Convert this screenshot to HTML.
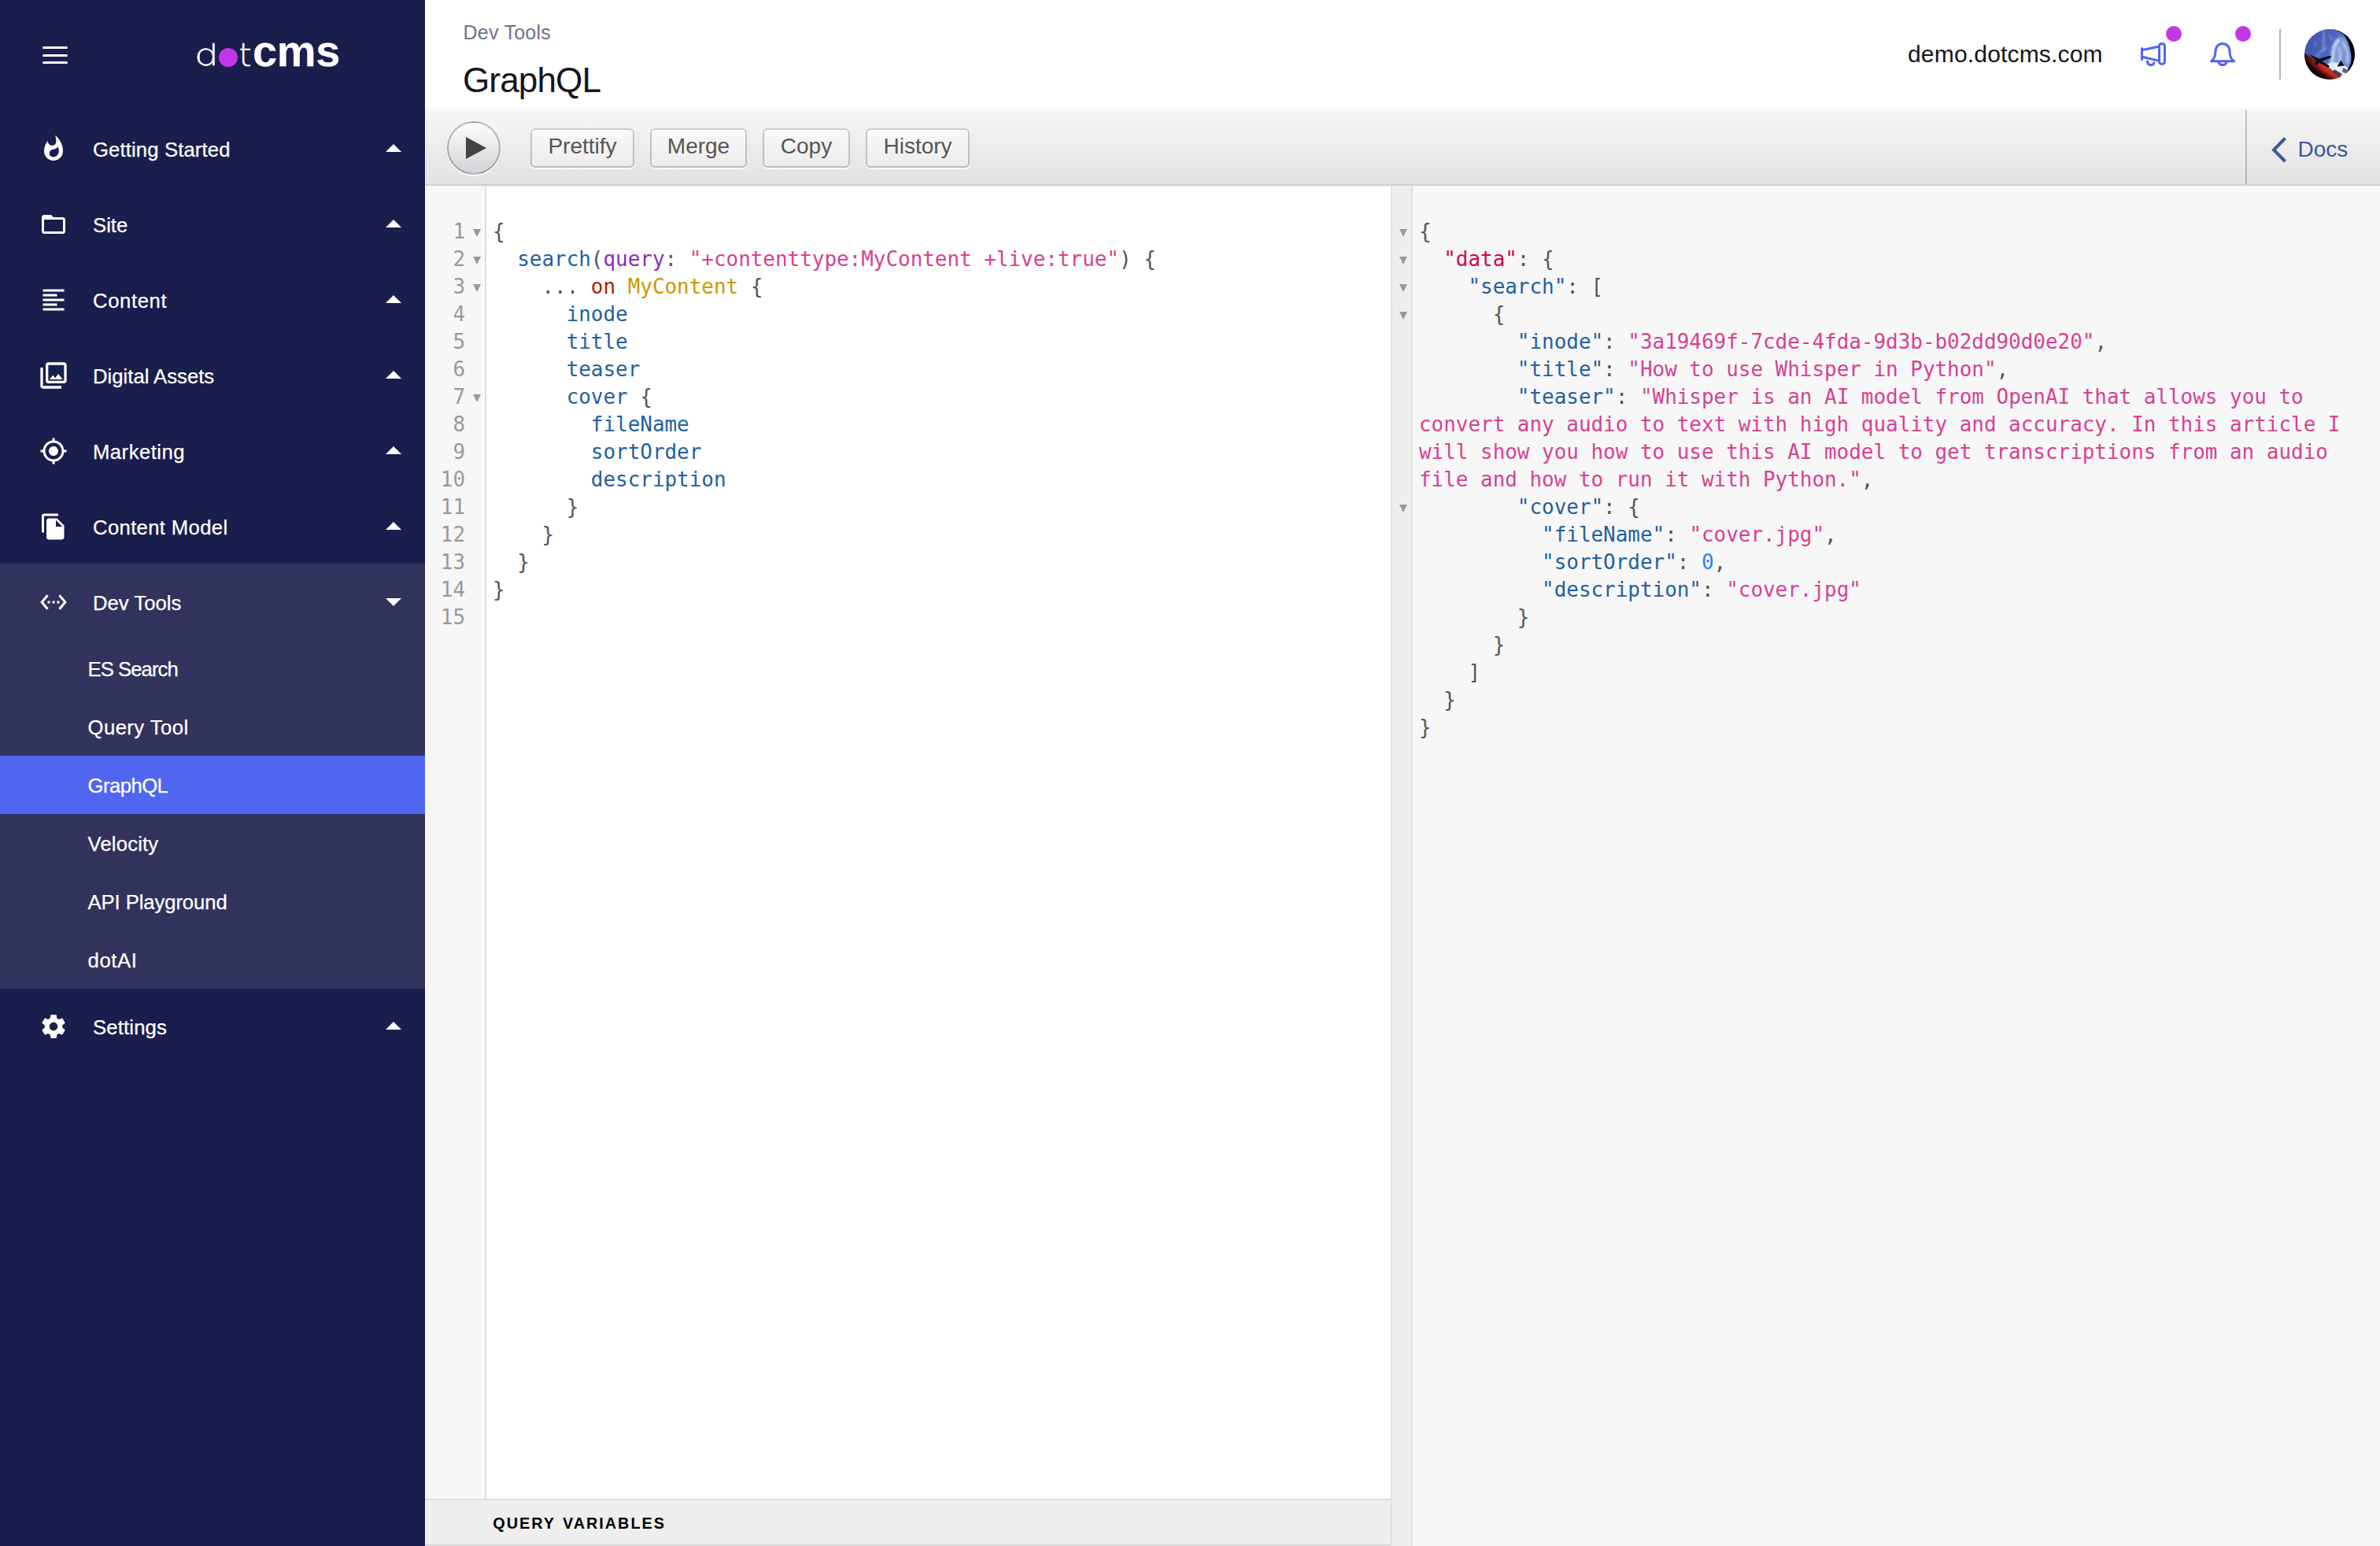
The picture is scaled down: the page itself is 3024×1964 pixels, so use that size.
<!DOCTYPE html>
<html lang="en">
<head>
<meta charset="utf-8">
<title>dotCMS - GraphQL</title>
<style>
*{box-sizing:border-box;margin:0;padding:0}
html,body{width:3024px;height:1964px;overflow:hidden;background:#fff}
@media (max-width:1600px){html{zoom:.5}}
body{position:relative;font-family:"Liberation Sans",sans-serif;color:#14151a}
.abs{position:absolute}
/* ---------- sidebar ---------- */
#nav{position:absolute;left:0;top:0;width:540px;height:1964px;background:#191e4c;color:#fff;-webkit-text-stroke:.250px #fff}
#burger i{position:absolute;left:54px;width:32px;height:3px;border-radius:1.5px;background:#fff}
#logo{position:absolute;left:0;top:0;color:#fff;white-space:nowrap}
#logo span{position:absolute;line-height:1}
#logo .dot{position:absolute;left:278px;top:61px;width:24px;height:24px;border-radius:50%;background:#c336e5}
.sect{position:absolute;left:0;top:716px;width:540px;height:540px;background:#31335c}
.sel{position:absolute;left:0;top:960px;width:540px;height:74px;background:#5066f0}
.mi{position:absolute;left:0;width:540px;height:96px}
.mi svg.ic{position:absolute;left:50px;top:30px;width:36px;height:36px;fill:#fff}
.mi .lb{position:absolute;left:118px;top:1px;line-height:96px;font-size:25.7px;white-space:nowrap}
.mi .ar{position:absolute;left:490px;top:42px;width:0;height:0;border-left:10px solid transparent;border-right:10px solid transparent;border-bottom:10px solid #fff}
.mi .ar.dn{border-bottom:0;border-top:10px solid #fff;top:43px}
.si{position:absolute;left:111.500px;height:74px;line-height:76px;font-size:25.7px;white-space:nowrap}
/* ---------- header ---------- */
#crumb{position:absolute;left:588.500px;top:26px;letter-spacing:.250px;font-size:25px;line-height:30px;color:#6c7389;white-space:nowrap}
#title{position:absolute;left:588px;top:76px;font-size:44px;line-height:52px;letter-spacing:-.850px;color:#14151a;white-space:nowrap}
#site{position:absolute;left:2424px;top:50px;letter-spacing:.180px;font-size:30px;line-height:38px;color:#14151a;white-space:nowrap}
.badge{position:absolute;top:33px;width:20px;height:20px;border-radius:50%;background:#c336e5}
#vdiv{position:absolute;left:2896px;top:37px;width:2px;height:64px;background:#afb3c0}
/* ---------- graphiql toolbar ---------- */
#bar{position:absolute;left:540px;top:138px;width:2484px;height:98px;background:linear-gradient(#f7f7f7,#e2e2e2);border-bottom:2px solid #d0d0d0}
#run{position:absolute;left:28px;top:16px;width:68px;height:68px;border-radius:34px;border:2px solid rgba(0,0,0,.25);background:linear-gradient(#fdfdfd,#d2d3d6);box-shadow:0 2px 0 #fff}
#run svg{position:absolute;left:-2px;top:-2px;width:68px;height:68px;fill:#444}
.tb{position:absolute;top:25px;height:50px;border-radius:6px;background:linear-gradient(#f9f9f9,#ececec);box-shadow:inset 0 0 0 2px rgba(0,0,0,.2),0 2px 0 rgba(255,255,255,.7),inset 0 2px #fff;color:#555;font-size:28px;line-height:34px;padding-top:6px;text-align:center;white-space:nowrap}
#docs{position:absolute;left:2313px;top:2px;width:171px;height:94px;border-left:2px solid rgba(0,0,0,.2);color:#3b5998;font-size:28px;line-height:34px;white-space:nowrap}
#docs svg{position:absolute;left:29px;top:32px;width:24px;height:36px;fill:none;stroke:#3b5998;stroke-width:4}
#docs span{position:absolute;left:64.500px;top:33px}
/* ---------- editors ---------- */
.mono{font-family:"DejaVu Sans Mono","Liberation Mono",monospace;font-size:25.930px;line-height:35px;white-space:pre}
#qgut{position:absolute;left:540px;top:236px;width:78px;height:1668px;background:#f7f7f7;border-right:2px solid #ddd}
#qgut .n{position:absolute;right:25px;color:#999;text-align:right}
.fold{position:absolute;width:0;height:0;border-left:5px solid transparent;border-right:5px solid transparent;border-top:10px solid #999}
#qcode{position:absolute;left:626px;top:277px;color:#555}
#qv{position:absolute;left:540px;top:1904px;width:1227px;height:60px;background:#eee;border-top:2px solid #e0e0e0;border-bottom:2px solid #d6d6d6}
#qv span{position:absolute;left:86.300px;top:16.500px;font-size:19.8px;line-height:24px;font-weight:700;letter-spacing:2px;color:#000;white-space:nowrap;word-spacing:2px}
#res{position:absolute;left:1767px;top:236px;width:1257px;height:1728px;background:#f7f7f7}
#rgut{position:absolute;left:0;top:0;width:28px;height:1728px;background:#eee;border-left:2px solid #e0e0e0;border-right:2px solid #e0e0e0}
#rcode{position:absolute;left:36px;top:41px;color:#555}
.k{color:#b11a04}.d{color:#d2054e}.p{color:#1f61a0}.a{color:#8b2bb9}.s{color:#d64292}.u{color:#2882f9}.t{color:#ca9800}
</style>
</head>
<body>

<!-- ================= SIDEBAR ================= -->
<div id="nav">
  <div id="burger"><i style="top:59px"></i><i style="top:68.5px"></i><i style="top:78px"></i></div>
  <div id="logo">
    <span style="left:246.500px;top:48px;font:200 37.500px 'DejaVu Sans Light','DejaVu Sans',sans-serif;transform:scaleX(1.3);transform-origin:0 0;-webkit-text-stroke:.5px #fff">d</span>
    <i class="dot"></i>
    <span style="left:303.500px;top:46px;font:200 41px 'DejaVu Sans Light','DejaVu Sans',sans-serif;-webkit-text-stroke:.5px #fff">t</span>
    <span style="left:321px;top:32px;font:700 56px 'Liberation Sans',sans-serif;letter-spacing:-.300px">cms</span>
  </div>

  <div class="sect"></div>
  <div class="sel"></div>

  <div class="mi" style="top:141px">
    <svg class="ic" viewBox="0 0 24 24"><path d="M13.5.67s.74 2.65.74 4.8c0 2.06-1.35 3.73-3.41 3.73-2.07 0-3.63-1.67-3.63-3.73l.03-.36C5.21 7.51 4 10.62 4 14c0 4.42 3.58 8 8 8s8-3.58 8-8C20 8.61 17.41 3.8 13.5.67zM11.71 19c-1.78 0-3.22-1.4-3.22-3.14 0-1.62 1.05-2.76 2.81-3.12 1.77-.36 3.6-1.21 4.62-2.58.39 1.29.59 2.65.59 4.04 0 2.65-2.15 4.8-4.8 4.8z"/></svg>
    <span class="lb" style="letter-spacing:0.12px">Getting Started</span><i class="ar"></i>
  </div>
  <div class="mi" style="top:237px">
    <svg class="ic" viewBox="0 0 24 24"><path d="M20 6h-8l-2-2H4c-1.1 0-1.99.9-1.99 2L2 18c0 1.1.9 2 2 2h16c1.1 0 2-.9 2-2V8c0-1.1-.9-2-2-2zm0 12H4V8h16v10z"/></svg>
    <span class="lb">Site</span><i class="ar"></i>
  </div>
  <div class="mi" style="top:333px">
    <svg class="ic" viewBox="0 0 24 24"><path d="M15 15H3v2h12v-2zm0-8H3v2h12V7zM3 13h18v-2H3v2zm0 8h18v-2H3v2zM3 3v2h18V3H3z"/></svg>
    <span class="lb" style="letter-spacing:0.6px">Content</span><i class="ar"></i>
  </div>
  <div class="mi" style="top:429px">
    <svg class="ic" style="left:48px;top:28px;width:40px;height:40px" viewBox="0 0 24 24"><path d="M20 4v12H8V4h12m0-2H8c-1.1 0-2 .9-2 2v12c0 1.1.9 2 2 2h12c1.1 0 2-.9 2-2V4c0-1.1-.9-2-2-2zm-8.500 9.670l1.690 2.260 2.480-3.100L19 15H9zM2 6v14c0 1.100.900 2 2 2h14v-2H4V6H2z"/></svg>
    <span class="lb">Digital Assets</span><i class="ar"></i>
  </div>
  <div class="mi" style="top:525px">
    <svg class="ic" viewBox="0 0 24 24"><path d="M12 8c-2.210 0-4 1.790-4 4s1.790 4 4 4 4-1.790 4-4-1.790-4-4-4zm8.940 3c-.460-4.170-3.770-7.480-7.940-7.940V1h-2v2.060C6.830 3.520 3.520 6.830 3.060 11H1v2h2.060c.460 4.170 3.770 7.480 7.940 7.940V23h2v-2.060c4.170-.460 7.480-3.770 7.940-7.940H23v-2h-2.060zM12 19c-3.870 0-7-3.130-7-7s3.130-7 7-7 7 3.130 7 7-3.130 7-7 7z"/></svg>
    <span class="lb" style="letter-spacing:0.47px">Marketing</span><i class="ar"></i>
  </div>
  <div class="mi" style="top:621px">
    <svg class="ic" viewBox="0 0 24 24"><path d="M16 1H4c-1.100 0-2 .900-2 2v14h2V3h12V1zm-1 4l6 6v10c0 1.100-.900 2-2 2H7.990C6.890 23 6 22.100 6 21l.010-14c0-1.100.890-2 1.990-2h7zm-1 7h5.500L14 6.500V12z"/></svg>
    <span class="lb" style="letter-spacing:0.34px">Content Model</span><i class="ar"></i>
  </div>
  <div class="mi" style="top:717px">
    <svg class="ic" viewBox="0 0 24 24"><path d="M7.770 6.760L6.230 5.480.820 12l5.410 6.520 1.540-1.280L3.420 12l4.350-5.240zM7 13h2v-2H7v2zm10-2h-2v2h2v-2zm-6 2h2v-2h-2v2zm6.770-7.520l-1.540 1.280L20.580 12l-4.350 5.240 1.540 1.280L23.180 12l-5.410-6.520z"/></svg>
    <span class="lb">Dev Tools</span><i class="ar dn"></i>
  </div>
  <span class="si" style="top:812px;letter-spacing:-0.95px">ES Search</span>
  <span class="si" style="top:886px;letter-spacing:0.43px">Query Tool</span>
  <span class="si" style="top:960px;letter-spacing:-0.55px">GraphQL</span>
  <span class="si" style="top:1034px;letter-spacing:0.17px">Velocity</span>
  <span class="si" style="top:1108px;letter-spacing:-0.1px">API Playground</span>
  <span class="si" style="top:1182px;letter-spacing:0.6px">dotAI</span>
  <div class="mi" style="top:1256px">
    <svg class="ic" viewBox="0 0 24 24"><path d="M19.430 12.980c.040-.320.070-.640.070-.980s-.030-.660-.070-.980l2.110-1.650c.190-.150.240-.420.120-.640l-2-3.460c-.120-.220-.390-.300-.610-.220l-2.490 1c-.520-.400-1.080-.730-1.690-.980l-.380-2.650C14.460 2.180 14.250 2 14 2h-4c-.250 0-.460.180-.490.420l-.380 2.650c-.610.250-1.170.590-1.690.980l-2.490-1c-.230-.090-.490 0-.610.220l-2 3.460c-.130.220-.070.490.120.640l2.110 1.650c-.040.320-.070.650-.070.980s.030.660.070.980l-2.110 1.650c-.190.150-.240.420-.120.640l2 3.460c.120.220.390.300.610.220l2.490-1c.520.400 1.080.730 1.690.980l.380 2.650c.030.240.240.420.490.420h4c.250 0 .460-.180.490-.420l.380-2.650c.610-.250 1.170-.590 1.690-.980l2.490 1c.230.090.490 0 .610-.220l2-3.460c.120-.220.070-.490-.120-.640l-2.110-1.650zM12 15.500c-1.930 0-3.500-1.570-3.500-3.500s1.570-3.500 3.500-3.500 3.500 1.570 3.500 3.500-1.570 3.500-3.500 3.500z"/></svg>
    <span class="lb" style="letter-spacing:0.15px">Settings</span><i class="ar"></i>
  </div>
</div>

<!-- ================= HEADER ================= -->
<div id="crumb">Dev Tools</div>
<div id="title">GraphQL</div>
<div id="site">demo.dotcms.com</div>
<svg class="abs" style="left:2716px;top:50px;width:40px;height:38px" viewBox="0 0 40 38" fill="none" stroke="#4f66ee" stroke-width="3" stroke-linecap="round" stroke-linejoin="round">
  <path d="M5.500 11.600v14"/>
  <path d="M6 13.500l20.500-4.200M6 22.200l20.500 4.900"/>
  <rect x="27.500" y="5.400" width="7" height="25.900" rx="3"/>
  <path d="M12.500 28a4.400 4.400 0 0 0 8.500 1.700"/>
</svg>
<i class="badge" style="left:2752px"></i>
<svg class="abs" style="left:2804px;top:50px;width:40px;height:38px" viewBox="0 0 40 38" fill="none" stroke="#4f66ee" stroke-width="3" stroke-linecap="round" stroke-linejoin="round">
  <path d="M5.500 27.700h29c-3.500-2.500-5-5-5.200-10 -.200-7 -3-12.200-9.300-12.200s-9.100 5.200-9.300 12.200c-.200 5-1.700 7.500-5.200 10z"/>
  <path d="M14.800 28.500a5.400 5.400 0 0 0 10.400 0"/>
</svg>
<i class="badge" style="left:2840px"></i>
<div id="vdiv"></div>
<svg class="abs" style="left:2928px;top:37px;width:64px;height:64px" viewBox="0 0 64 64">
  <defs>
    <clipPath id="avc"><circle cx="32" cy="32" r="32"/></clipPath>
    <linearGradient id="avg" x1="0" y1="0" x2="1" y2=".5"><stop offset="0" stop-color="#3d52ab"/><stop offset=".5" stop-color="#4a63bb"/><stop offset="1" stop-color="#6c8ad4"/></linearGradient>
    <linearGradient id="avr" gradientUnits="userSpaceOnUse" x1="24" y1="45" x2="15.500" y2="58.500"><stop offset="0" stop-color="#d93424"/><stop offset=".3" stop-color="#c42b1d"/><stop offset=".7" stop-color="#3a0806"/><stop offset="1" stop-color="#020104"/></linearGradient>
    <linearGradient id="avd" x1="0" y1="0" x2="1" y2="0"><stop offset="0" stop-color="#000" stop-opacity=".75"/><stop offset=".5" stop-color="#000" stop-opacity="0"/></linearGradient>
    <filter id="avb" x="-20%" y="-20%" width="140%" height="140%"><feGaussianBlur stdDeviation="1.500"/></filter>
    <filter id="avs" x="-20%" y="-20%" width="140%" height="140%"><feGaussianBlur stdDeviation=".600"/></filter>
  </defs>
  <g clip-path="url(#avc)">
    <rect width="64" height="64" fill="url(#avg)"/>
    <g filter="url(#avb)" fill="none" stroke="#dcebfa" stroke-linecap="round">
      <path d="M47 16c-3 8-3 16-4 24" stroke-width="13" opacity=".28"/>
      <path d="M43 14c-5 5-7 12-7 19 0 5-1 9-3 12" stroke-width="4.500" opacity=".8"/>
      <path d="M50 18c4 6 6 14 4 24" stroke-width="4" opacity=".6"/>
      <path d="M44 24c2 6 2 12 0 18" stroke-width="3" opacity=".55"/>
      <path d="M24.500 3v24" stroke-width="1.600" opacity=".6"/>
      <path d="M16 34c3-5 7-8 12-10" stroke-width="1.600" opacity=".5"/>
      <path d="M32 8l3 5M12 20l3-3" stroke-width="1.600" opacity=".4"/>
    </g>
    <path d="M35 0C44 1.500 49 5.500 52 10S58 22 59.200 32 58.200 45 54 55L58 64H64V0z" fill="#03030a" filter="url(#avs)"/>
    <path d="M0 30.500L18 42 30 48.500 47 61 40 72H0z" fill="url(#avr)"/>
    <path d="M0 30.500L18 42 30 48.500 47 61 40 72H0z" fill="url(#avd)"/>
    <g filter="url(#avs)">
      <path d="M27 45l9-3 8 1 10 5 2 8-8 6z" fill="#e6eef8"/>
      <path d="M38 51l10 6-3 4-9-6z" fill="#2a313b" opacity=".85"/>
      <path d="M49 49l6 3-1 5-6-3z" fill="#394350" opacity=".8"/>
      <path d="M5 31.500l13.500 6.300 14.500-4.300.800 2.800-11.500 4.500 9.700 6-1.500 2.300-12-6.600-2 3.500-3.500-2 1.500-4.200z" fill="#0a0c12"/>
      <path d="M46.500 39.500l4 7-9 1z" fill="#07080c"/>
    </g>
  </g>
</svg>

<!-- ================= GRAPHIQL TOOLBAR ================= -->
<div id="bar">
  <div id="run"><svg viewBox="0 0 68 68"><path d="M24 20L50 34 24 48z"/></svg></div>
  <div class="tb" style="left:134px;width:132px">Prettify</div>
  <div class="tb" style="left:286px;width:123px">Merge</div>
  <div class="tb" style="left:429px;width:111px">Copy</div>
  <div class="tb" style="left:560px;width:132px">History</div>
  <div id="docs"><svg viewBox="0 0 24 36"><path d="M19.500 3.500L5 18.500 19.500 33"/></svg><span>Docs</span></div>
</div>

<!-- ================= QUERY EDITOR ================= -->
<div id="qgut" class="mono">
  <span class="n" style="top:41px">1</span>
  <span class="n" style="top:76px">2</span>
  <span class="n" style="top:111px">3</span>
  <span class="n" style="top:146px">4</span>
  <span class="n" style="top:181px">5</span>
  <span class="n" style="top:216px">6</span>
  <span class="n" style="top:251px">7</span>
  <span class="n" style="top:286px">8</span>
  <span class="n" style="top:321px">9</span>
  <span class="n" style="top:356px">10</span>
  <span class="n" style="top:391px">11</span>
  <span class="n" style="top:426px">12</span>
  <span class="n" style="top:461px">13</span>
  <span class="n" style="top:496px">14</span>
  <span class="n" style="top:531px">15</span>
  <i class="fold" style="left:61px;top:55px"></i>
  <i class="fold" style="left:61px;top:90px"></i>
  <i class="fold" style="left:61px;top:125px"></i>
  <i class="fold" style="left:61px;top:265px"></i>
</div>
<div id="qcode" class="mono">{
  <span class="p">search</span>(<span class="a">query</span>: <span class="s">"+contenttype:MyContent +live:true"</span>) {
    ... <span class="k">on</span> <span class="t">MyContent</span> {
      <span class="p">inode</span>
      <span class="p">title</span>
      <span class="p">teaser</span>
      <span class="p">cover</span> {
        <span class="p">fileName</span>
        <span class="p">sortOrder</span>
        <span class="p">description</span>
      }
    }
  }
}
</div>
<div id="qv"><span>QUERY VARIABLES</span></div>

<!-- ================= RESULT ================= -->
<div id="res">
  <div id="rgut"><i class="fold" style="left:9px;top:55px"></i><i class="fold" style="left:9px;top:90px"></i><i class="fold" style="left:9px;top:125px"></i><i class="fold" style="left:9px;top:160px"></i><i class="fold" style="left:9px;top:405px"></i></div>
  <div id="rcode" class="mono">{
  <span class="d">"data"</span>: {
    <span class="p">"search"</span>: [
      {
        <span class="p">"inode"</span>: <span class="s">"3a19469f-7cde-4fda-9d3b-b02dd90d0e20"</span>,
        <span class="p">"title"</span>: <span class="s">"How to use Whisper in Python"</span>,
        <span class="p">"teaser"</span>: <span class="s">"Whisper is an AI model from OpenAI that allows you to
convert any audio to text with high quality and accuracy. In this article I
will show you how to use this AI model to get transcriptions from an audio
file and how to run it with Python."</span>,
        <span class="p">"cover"</span>: {
          <span class="p">"fileName"</span>: <span class="s">"cover.jpg"</span>,
          <span class="p">"sortOrder"</span>: <span class="u">0</span>,
          <span class="p">"description"</span>: <span class="s">"cover.jpg"</span>
        }
      }
    ]
  }
}
</div>
</div>

</body>
</html>
